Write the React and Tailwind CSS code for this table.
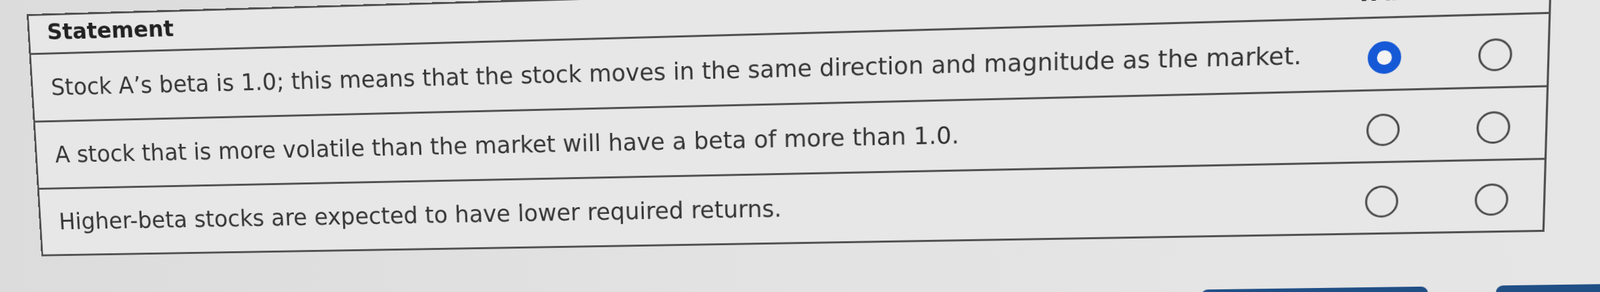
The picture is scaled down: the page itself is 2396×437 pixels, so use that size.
const rows = [
  {
    id: 1,
    text: "Stock A’s beta is 1.0; this means that the stock moves in the same direction and magnitude as the market.",
    answer: "true",
  },
  {
    id: 2,
    text: "A stock that is more volatile than the market will have a beta of more than 1.0.",
    answer: null,
  },
  {
    id: 3,
    text: "Higher-beta stocks are expected to have lower required returns.",
    answer: null,
  },
];

// radio look, selected one is a thick blue ring
const Radio = ({ checked }) => (
  <span
    className={`block w-[47px] h-[47px] rounded-full ${
      checked
        ? "border-[13px] border-[#1659d6] bg-[#f3f3f3]"
        : "border-[3.5px] border-[#4c4c4c]"
    }`}
  />
);

const App = () => {
  return (
    <div className="w-full h-[437px] overflow-hidden bg-linear-to-r from-[#dcdcdc] via-[#e3e3e3] to-[#e6e6e6] font-['DejaVu_Sans',sans-serif]">
      {/* photo of a screen: tilted a bit */}
      <div className="w-[2270px] ml-[6px] -mt-[10px] origin-[1135px_188px] [transform:perspective(2000px)_rotate(-1.3deg)_rotateY(-3.9deg)_rotateX(-4.5deg)_skewX(-0.6deg)]">
        <table className="w-full border-collapse border-[3px] border-[#505050] bg-[#e7e7e7] text-[#353535]">
          <colgroup>
            <col />
            <col className="w-[166px]" />
            <col className="w-[146px]" />
          </colgroup>
          <thead>
            <tr className="h-[60px] border-b-[3px] border-[#505050]">
              <th className="pl-[28px] pb-[7px] text-left text-[34px] leading-none font-bold text-[#222]">Statement</th>
              <th className="pb-[13px] text-center text-[34px] leading-none font-bold text-[#222]">True</th>
              <th className="pb-[13px] text-center text-[34px] leading-none font-bold text-[#222]">False</th>
            </tr>
          </thead>
          <tbody>
            {rows.map((r) => (
              <tr key={r.id} className="h-[105px] border-b-[3px] border-[#505050]">
                <td className="pl-[29px] text-[35.2px] leading-none">{r.text}</td>
                <td>
                  <div className="flex justify-center mt-[10px]">
                    <Radio checked={r.answer === "true"} />
                  </div>
                </td>
                <td>
                  <div className="flex justify-center mt-[10px]">
                    <Radio checked={r.answer === "false"} />
                  </div>
                </td>
              </tr>
            ))}
          </tbody>
        </table>

        {/* buttons below, mostly out of frame */}
        <div className="flex gap-[96px] pl-[1782px] mt-[78px]">
          <button aria-label="previous" className="shrink-0 w-[326px] h-[60px] rounded-t-[10px] bg-[#204f86]" />
          <button aria-label="next" className="shrink-0 w-[326px] h-[60px] rounded-t-[10px] bg-[#204f86]" />
        </div>
      </div>
    </div>
  );
};

export default App;
